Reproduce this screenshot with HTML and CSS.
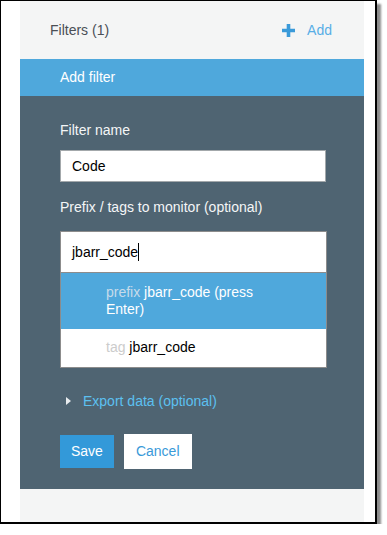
FILE: index.html
```html
<!DOCTYPE html>
<html lang="en">
<head>
    <meta charset="UTF-8">
    <meta name="viewport" content="width=device-width, initial-scale=1.0">
    <title>Filters</title>
    <link rel="stylesheet" href="styles.css">
</head>
<body>
    <div class="frame">
        <div class="panel">
            <div class="panel-header">
                <div class="title">Filters (1)</div>
                <a class="add-link" href="#">
                    <svg width="13" height="13" viewBox="0 0 13 13">
                        <path d="M4.7 0h3.6v4.7H13v3.6H8.3V13H4.7V8.3H0V4.7h4.7z" fill="#3a9ad9"/>
                    </svg>
                    <span>Add</span>
                </a>
            </div>

            <div class="form-title">Add filter</div>

            <div class="form-body">
                <label class="field-label">Filter name</label>
                <input class="text-input" type="text" value="Code">

                <label class="field-label">Prefix / tags to monitor (optional)</label>
                <div class="tag-box">
                    <div class="tag-input">jbarr_code<span class="caret"></span></div>
                    <div class="suggestion active"><span class="kind">prefix</span> jbarr_code (press Enter)</div>
                    <div class="suggestion last"><span class="kind">tag</span> jbarr_code</div>
                </div>

                <a class="export-link" href="#"><span class="arrow"></span>Export data (optional)</a>

                <div class="actions">
                    <button class="btn btn-save">Save</button>
                    <button class="btn btn-cancel">Cancel</button>
                </div>
            </div>

            <div class="panel-footer"></div>
        </div>
    </div>
</body>
</html>
```

FILE: styles.css
```css
body {
    margin: 0;
    font-family: "Liberation Sans", Arial, sans-serif;
    font-size: 14px;
    background-color: #fff;
}
.frame {
    width: 374px;
    border-style: solid;
    border-color: #000;
    border-width: 1px 2px 2px 1px;
    background-color: #fff;
    box-shadow: 4px 4px 2px rgba(0, 0, 0, 0.45);
}
.panel {
    margin-left: 19px;
    width: 344px;
    background-color: #f4f5f5;
}
.panel-header {
    height: 58px;
    display: flex;
    justify-content: space-between;
    align-items: center;
    padding: 0 32px 0 30px;
}
.title {
    color: #4a4f55;
}
.add-link {
    display: flex;
    align-items: center;
    gap: 12px;
    text-decoration: none;
    color: #58aee6;
}

.form-title {
    height: 37px;
    line-height: 37px;
    padding-left: 40px;
    background-color: #4fa8dc;
    color: #fff;
}
.form-body {
    background-color: #4f6472;
    padding: 26px 38px 20px 40px;
    display: flex;
    flex-direction: column;
    align-items: flex-start;
}
.field-label {
    color: #f4f6f7;
    line-height: 16px;
    margin-bottom: 12px;
}
.text-input {
    box-sizing: border-box;
    width: 266px;
    height: 32px;
    margin: 0 0 17px 0;
    padding: 0 11px;
    border: 1px solid #a3a8ab;
    font-family: inherit;
    font-size: 14px;
    color: #000;
    background-color: #fff;
    outline: none;
}
.tag-box {
    box-sizing: border-box;
    width: 267px;
    margin-top: 4px;
    border: 1px solid #8c8c8c;
    background-color: #fff;
}
.tag-input {
    padding: 11px;
    line-height: 16px;
    color: #000;
    border-bottom: 1px solid #8c8c8c;
}
.caret {
    display: inline-block;
    width: 1px;
    height: 18px;
    background-color: #000;
    vertical-align: -4px;
}
.suggestion {
    padding: 11px 45px;
    line-height: 17px;
    color: #000;
}
.suggestion.last {
    padding-top: 10px;
}
.suggestion .kind {
    color: #cccccc;
}
.suggestion.active {
    background-color: #4fa8dc;
    color: #fff;
}
.suggestion.active .kind {
    color: #c6dbea;
}
.export-link {
    display: flex;
    align-items: center;
    margin-top: 25px;
    line-height: 16px;
    color: #5cc0f0;
    text-decoration: none;
}
.arrow {
    width: 0;
    height: 0;
    margin: 0 12px 0 6px;
    border-top: 4px solid transparent;
    border-bottom: 4px solid transparent;
    border-left: 5px solid #e8ecef;
}
.actions {
    display: flex;
    align-items: center;
    gap: 10px;
    margin-top: 25px;
}
.btn {
    font-family: inherit;
    font-size: 14px;
    line-height: 17px;
    padding: 8px 11px;
    border: none;
    cursor: pointer;
}
.btn-save {
    background-color: #3399d9;
    color: #fff;
}
.btn-cancel {
    background-color: #fff;
    color: #3a9ad9;
    border: 1px solid #fff;
}
.panel-footer {
    height: 33px;
}
```
